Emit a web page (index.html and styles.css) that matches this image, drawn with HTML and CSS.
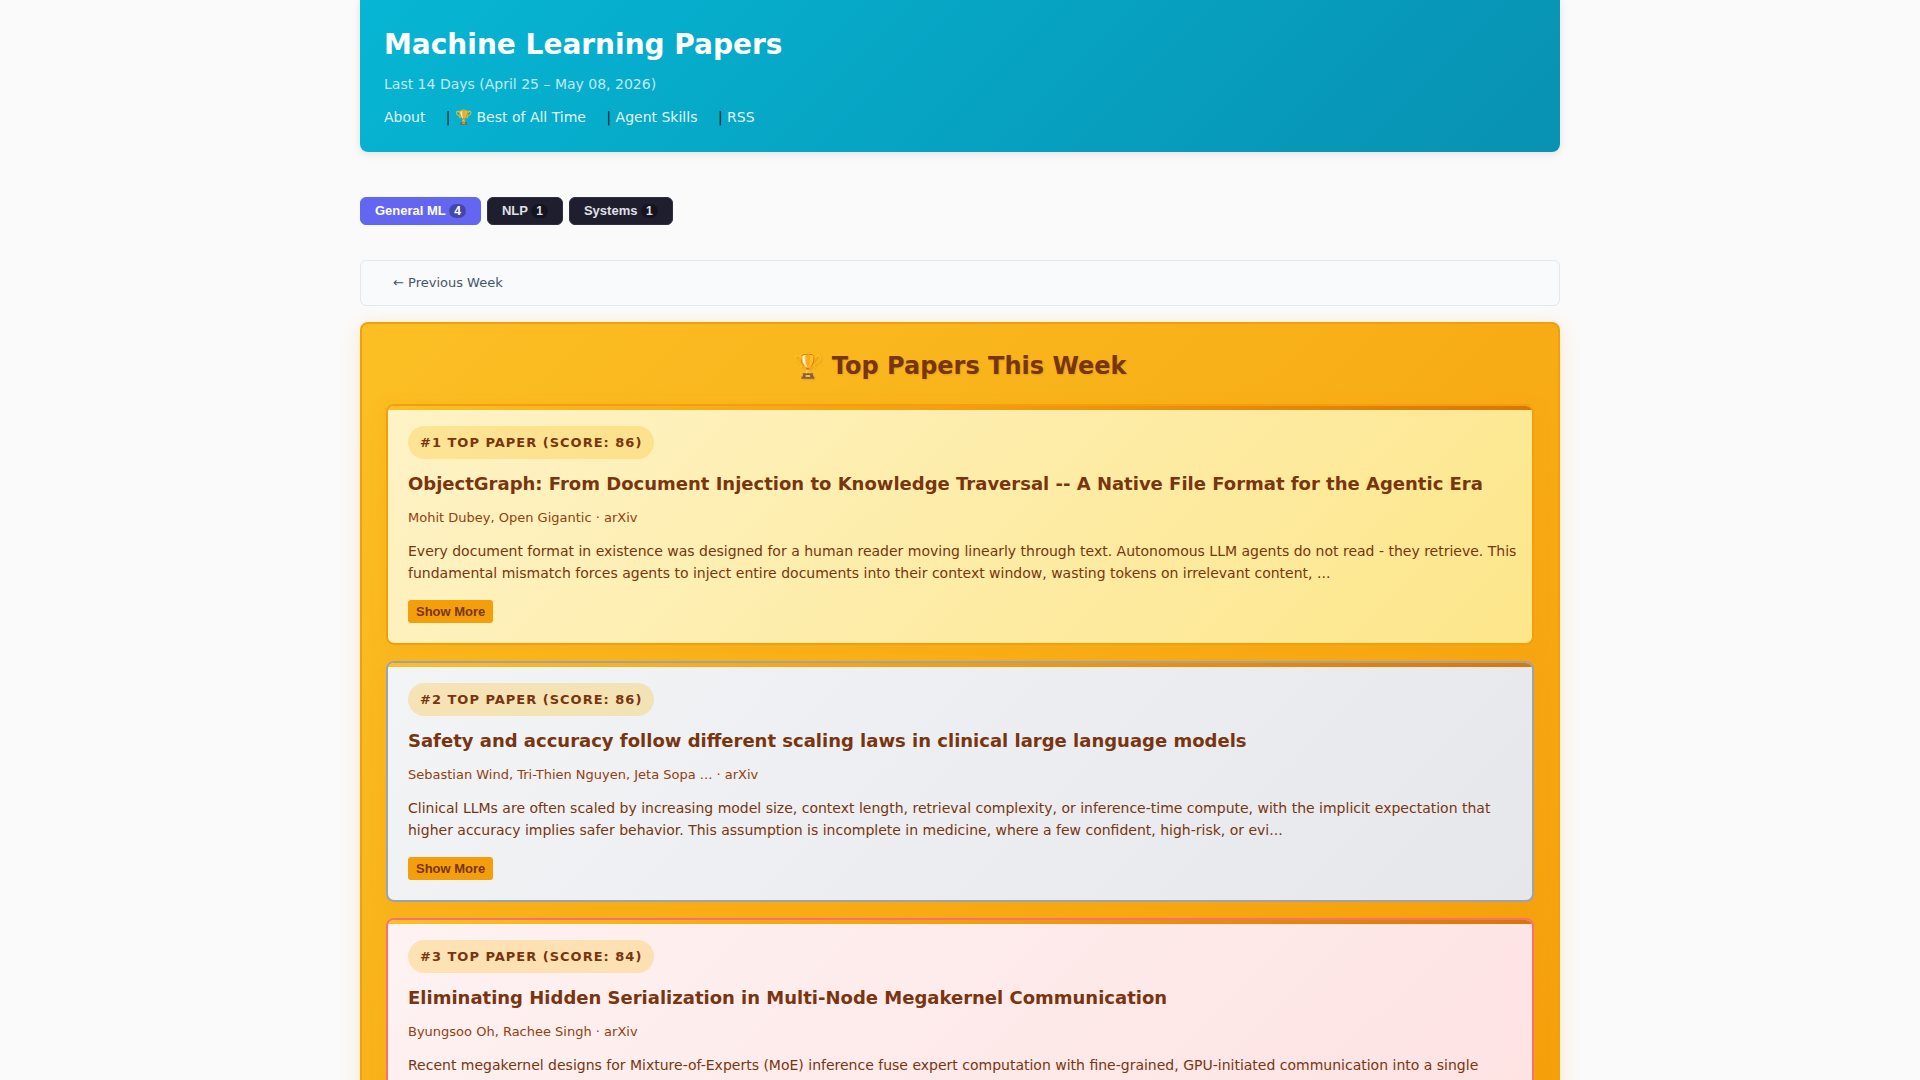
FILE: index.html
```html
<!DOCTYPE html>
<html lang="en">
<head>
<meta charset="utf-8">
<meta name="viewport" content="width=device-width, initial-scale=1">
<title>Machine Learning Papers</title>
<link rel="stylesheet" href="styles.css">
</head>
<body>
<div class="container">
  <header class="site-header">
    <h1>Machine Learning Papers</h1>
    <p class="period">Last 14 Days (April 25 – May 08, 2026)</p>
    <nav class="site-nav">
      <a href="#about">About</a>
      | <a href="#best">🏆 Best of All Time</a>
      | <a href="#skills">Agent Skills</a>
      | <a href="#rss">RSS</a>
    </nav>
  </header>

  <div class="tabs">
    <button type="button" class="tab active">General ML <span class="count">4</span></button>
    <button type="button" class="tab">NLP <span class="count">1</span></button>
    <button type="button" class="tab">Systems <span class="count">1</span></button>
  </div>

  <nav class="week-nav">
    <a href="#previous">← Previous Week</a>
  </nav>

  <main class="top-papers">
    <h2>🏆 Top Papers This Week</h2>

    <article class="paper gold">
      <span class="badge">#1 TOP PAPER (SCORE: 86)</span>
      <h3>ObjectGraph: From Document Injection to Knowledge Traversal -- A Native File Format for the Agentic Era</h3>
      <p class="meta">Mohit Dubey, Open Gigantic · arXiv</p>
      <p class="abstract">Every document format in existence was designed for a human reader moving linearly through text. Autonomous LLM agents do not read - they retrieve. This fundamental mismatch forces agents to inject entire documents into their context window, wasting tokens on irrelevant content, ...</p>
      <button type="button" class="more">Show More</button>
    </article>

    <article class="paper silver">
      <span class="badge">#2 TOP PAPER (SCORE: 86)</span>
      <h3>Safety and accuracy follow different scaling laws in clinical large language models</h3>
      <p class="meta">Sebastian Wind, Tri-Thien Nguyen, Jeta Sopa ... · arXiv</p>
      <p class="abstract">Clinical LLMs are often scaled by increasing model size, context length, retrieval complexity, or inference-time compute, with the implicit expectation that higher accuracy implies safer behavior. This assumption is incomplete in medicine, where a few confident, high-risk, or evi...</p>
      <button type="button" class="more">Show More</button>
    </article>

    <article class="paper bronze">
      <span class="badge">#3 TOP PAPER (SCORE: 84)</span>
      <h3>Eliminating Hidden Serialization in Multi-Node Megakernel Communication</h3>
      <p class="meta">Byungsoo Oh, Rachee Singh · arXiv</p>
      <p class="abstract">Recent megakernel designs for Mixture-of-Experts (MoE) inference fuse expert computation with fine-grained, GPU-initiated communication into a single persistent kernel...</p>
      <button type="button" class="more">Show More</button>
    </article>
  </main>
</div>
</body>
</html>
```
FILE: styles.css
```css
* {
  box-sizing: border-box;
}

body {
  margin: 0;
  background: #fafafa;
  color: #1a1a1a;
  font: 14px/22px "DejaVu Sans", sans-serif;
}

h1, h2, h3, p {
  margin: 0;
}

a {
  text-decoration: none;
}

.container {
  max-width: 1200px;
  margin: 0 auto;
}

.site-header {
  padding: 24px;
  border-radius: 0 0 8px 8px;
  background: linear-gradient(135deg, #06b6d4 0%, #0891b2 100%);
  box-shadow: 0 2px 8px rgba(0, 0, 0, 0.1);
}

.site-header h1 {
  margin-bottom: 7px;
  color: #fff;
  font-size: 28px;
  line-height: 42px;
}

.period {
  margin-bottom: 11px;
  color: rgba(255, 255, 255, 0.75);
}

.site-nav a {
  margin-right: 16px;
  color: rgba(255, 255, 255, 0.9);
}

.tabs {
  display: flex;
  flex-wrap: wrap;
  gap: 6px;
  margin: 45px 0 35px;
}

.tab {
  padding: 5px 14px;
  border: 1px solid #2d2d44;
  border-radius: 6px;
  background: #1e1e2e;
  color: #e0e0e8;
  font: bold 13px/16px "Liberation Sans", sans-serif;
}

.tab.active {
  border-color: #6366f1;
  background: #6366f1;
  color: #fff;
}

.count {
  display: inline-block;
  padding: 0 5px;
  border-radius: 10px;
  background: rgba(0, 0, 0, 0.3);
  font-size: 12px;
  line-height: 14px;
}

.week-nav {
  margin-bottom: 16px;
  padding: 11px 32px;
  border: 1px solid #e2e8f0;
  border-radius: 6px;
  background: #f8fafc;
  font-size: 13px;
}

.week-nav a {
  color: #475569;
}

.top-papers {
  display: flex;
  flex-direction: column;
  gap: 16px;
  padding: 24px;
  border: 2px solid #f59e0b;
  border-radius: 8px;
  background: linear-gradient(135deg, #fbbf24 0%, #f59e0b 100%);
  box-shadow: 0 4px 20px rgba(245, 158, 11, 0.2);
}

.top-papers h2 {
  margin-bottom: 4px;
  color: #78350f;
  font-size: 24px;
  line-height: 36px;
  text-align: center;
  text-shadow: 1px 1px 2px rgba(0, 0, 0, 0.1);
}

.paper {
  position: relative;
  overflow: hidden;
  padding: 20px 12px 20px 20px;
  border: 2px solid #f59e0b;
  border-radius: 8px;
  box-shadow: 0 4px 16px rgba(245, 158, 11, 0.3);
  color: #78350f;
}

.paper::before {
  content: "";
  position: absolute;
  top: 0;
  left: 0;
  right: 0;
  height: 4px;
  background: linear-gradient(90deg, #fbbf24, #f59e0b, #d97706);
}

.gold {
  background: linear-gradient(135deg, #fef3c7 0%, #fde68a 100%);
}

.silver {
  border-color: #9ca3af;
  background: linear-gradient(135deg, #f3f4f6 0%, #e5e7eb 100%);
}

.bronze {
  border-color: #f87171;
  background: linear-gradient(135deg, #fef2f2 0%, #fee2e2 100%);
}

.badge {
  display: inline-block;
  padding: 6px 12px;
  border-radius: 20px;
  background: rgba(251, 191, 36, 0.3);
  font-size: 13px;
  font-weight: bold;
  line-height: 21px;
  letter-spacing: 1px;
}

.paper h3 {
  margin: 13px 0 12px;
  font-size: 18px;
  line-height: 24px;
}

.meta {
  margin-bottom: 12px;
  color: #92400e;
  font-size: 13px;
  line-height: 20px;
}

.abstract {
  margin-bottom: 16px;
  line-height: 22px;
}

.more {
  display: block;
  padding: 4px 8px;
  border: 0;
  border-radius: 3px;
  background: #f59e0b;
  color: #78350f;
  font: bold 13px/15px "Liberation Sans", sans-serif;
}
```
